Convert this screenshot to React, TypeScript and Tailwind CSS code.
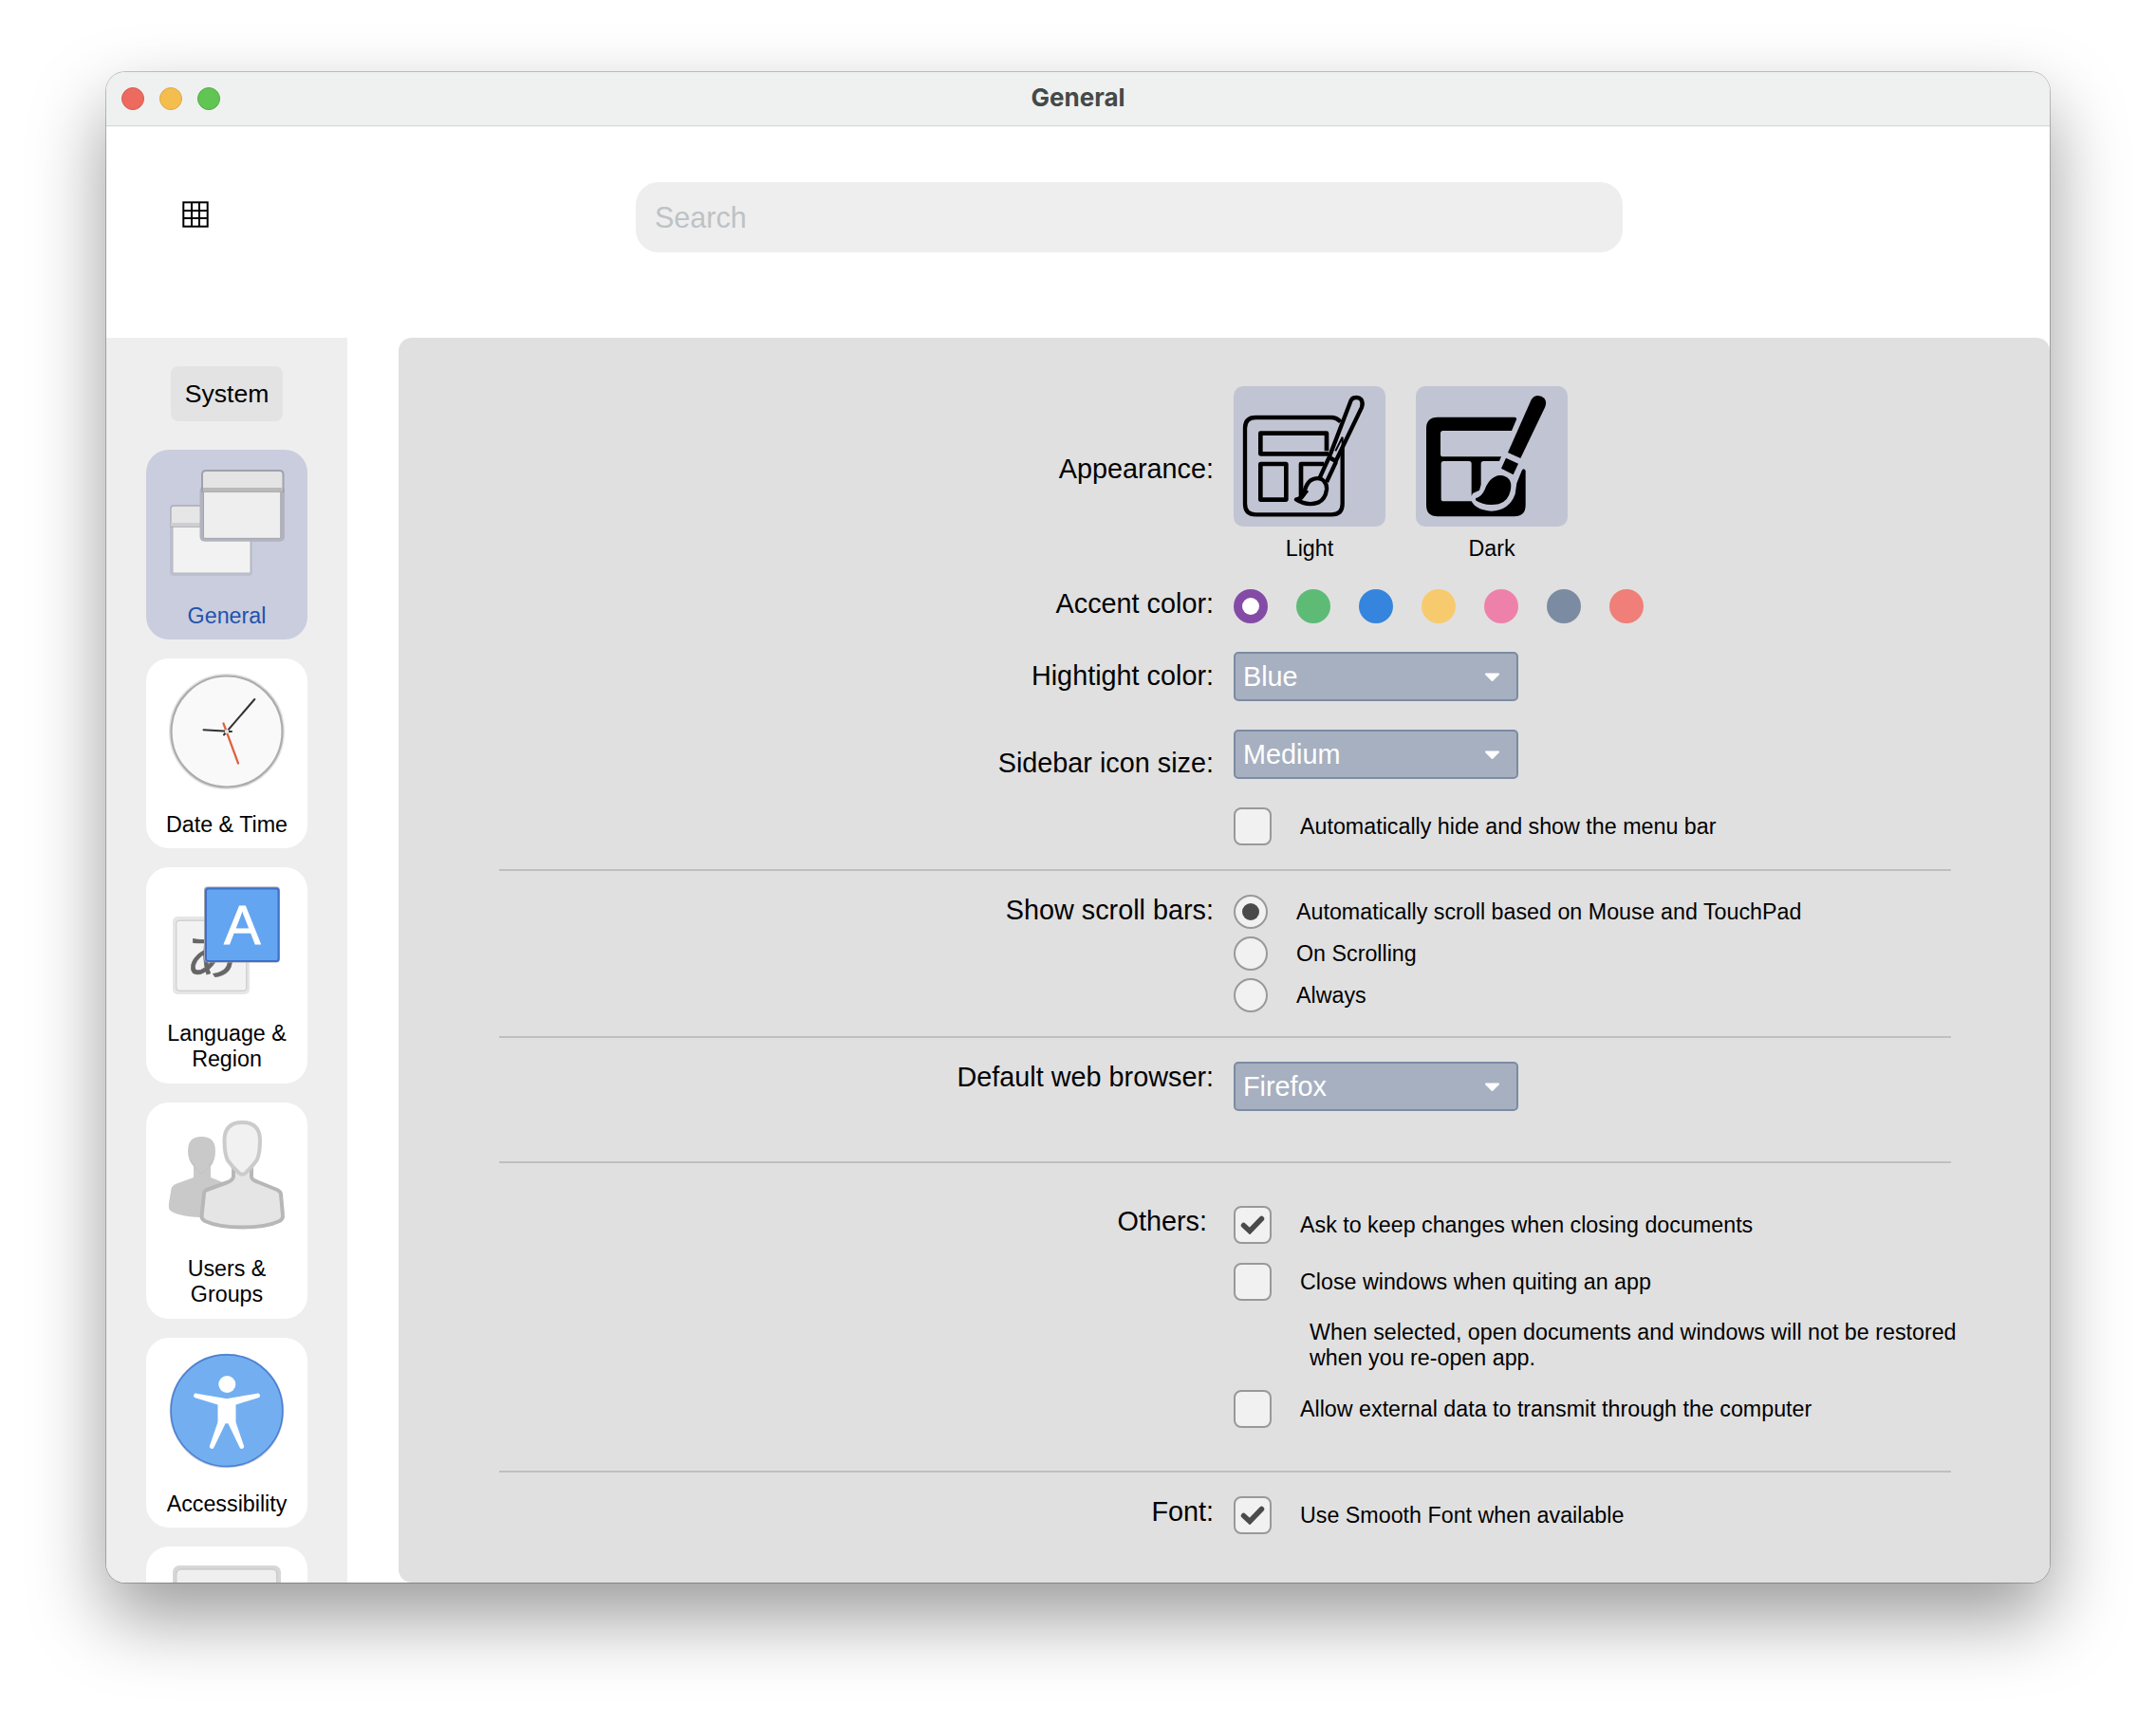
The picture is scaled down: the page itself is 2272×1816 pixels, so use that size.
import React, { useState } from "react";

function Row({
  label,
  className = "",
  labelClass = "pr-px",
  children,
}: {
  label?: string;
  className?: string;
  labelClass?: string;
  children: React.ReactNode;
}) {
  return (
    <div className={`flex items-start gap-5 ${className}`}>
      <div className={`w-[860px] shrink-0 text-right text-[28.8px] leading-[34px] ${labelClass}`}>
        {label}
      </div>
      <div>{children}</div>
    </div>
  );
}

function Divider({ className = "" }: { className?: string }) {
  return <div className={`ml-[106px] h-[2px] w-[1530px] bg-[#bfbfbf] ${className}`} />;
}

function Select({ value }: { value: string }) {
  return (
    <button className="flex h-[52px] w-[300px] items-center justify-between rounded-[5px] border-2 border-[#7b8ca3] bg-[#a7b0c0] pl-[8px] pr-[17px] text-[28.8px] leading-[34px] text-white">
      <span>{value}</span>
      <svg width="17" height="10" viewBox="0 0 17 10" className="mt-[2px]">
        <path d="M2 1.5h13L8.5 8z" fill="#fff" stroke="#fff" strokeWidth="2" strokeLinejoin="round" />
      </svg>
    </button>
  );
}

function Checkbox({
  text,
  initial = false,
  className = "",
}: {
  text: string;
  initial?: boolean;
  className?: string;
}) {
  const [on, setOn] = useState(initial);
  return (
    <div className={`flex items-center gap-[30px] ${className}`} onClick={() => setOn(!on)}>
      <div className="flex size-10 items-center justify-center rounded-[8px] border-2 border-[#999999] bg-[#f1f1f1]">
        {on && (
          <svg width="26" height="20" viewBox="0 0 26 20">
            <path
              d="M3.5 10.5L10 16.5L22.5 3.5"
              fill="none"
              stroke="#4a4a4a"
              strokeWidth="5.5"
              strokeLinecap="round"
              strokeLinejoin="miter"
            />
          </svg>
        )}
      </div>
      <span className="text-[23.27px] leading-[27px]">{text}</span>
    </div>
  );
}

function Radio({ text, on = false, onSelect }: { text: string; on?: boolean; onSelect: () => void }) {
  return (
    <div className="flex items-center gap-[30px]" onClick={onSelect}>
      <div className="flex size-9 items-center justify-center rounded-full border-2 border-[#999999] bg-[#f1f1f1]">
        {on && <div className="size-[18px] rounded-full bg-[#4a4a4a]" />}
      </div>
      <span className="text-[23.27px] leading-[27px]">{text}</span>
    </div>
  );
}

function LightArt() {
  return (
    <svg width="160" height="148" viewBox="30 21 480 444" fill="none" stroke="#000" strokeWidth="13">
      <path d="M368 134Q356 120 338 120H100Q66 120 66 154V393Q66 427 100 427H340Q374 427 374 393V215" />
      <path d="M330 235H115V170H324V226" strokeLinejoin="round" strokeWidth="14" />
      <rect x="115" y="267" width="81" height="113" rx="1" strokeWidth="14" />
      <path d="M316 267H243V374L262 350" strokeLinejoin="round" strokeWidth="14" />
      <path
        d="M401 66Q406 57 416 57Q427 56 433 63Q440 74 435 88L353 258L332 246Z"
        strokeLinejoin="round"
      />
      <path d="M331 248L302 311M354 260L324 324" />
      <path d="M352 226L374 182V214" strokeWidth="6" />
      <path
        d="M228 379Q243 378 252 362Q258 331 273 319Q290 308 308 315Q326 326 324 348Q320 379 297 389Q261 401 228 379Z"
        strokeLinejoin="round"
      />
    </svg>
  );
}

function DarkArt() {
  return (
    <svg width="160" height="148" viewBox="606 21 480 444">
      <path d="M675 119H918Q926 119 924 127L909 162H692Q684 162 684 170V236Q684 244 692 244H876L870 258H820Q812 258 812 266V332L807 350L786 360L782 368V266Q782 258 774 258H694Q686 258 686 266V377Q686 385 694 385H782Q796 413 845 416Q902 413 920 362L925 328L941 288Q947 278 953 288V397Q953 433 917 433H675Q639 433 639 397V155Q639 119 675 119Z" />
      <path d="M971 64Q979 51 992 51Q1004 51 1012 59Q1021 71 1015 86L937 249L897 231Z" />
      <path d="M891 248L930 266L914 301L876 281Z" />
      <path d="M795 376Q814 371 824 348Q836 314 864 304Q888 300 902 317Q910 329 905 352Q898 386 868 394Q824 402 795 382Z" />
    </svg>
  );
}

function AppearanceOption({ name, children }: { name: string; children: React.ReactNode }) {
  return (
    <div className="flex flex-col items-center">
      <div className="h-[148px] w-[160px] rounded-[10px] bg-[#c1c4d3]">{children}</div>
      <span className="mt-[10px] text-[23.27px] leading-[27px]">{name}</span>
    </div>
  );
}

function GeneralIcon() {
  return (
    <svg width="170" height="150" viewBox="0 0 170 150">
      <rect x="25" y="78" width="87" height="55" rx="4" fill="#bbbfd0" />
      <rect x="28" y="76" width="82" height="54" rx="1.5" fill="#f2f2f2" stroke="#b4b6be" strokeWidth="1" />
      <path d="M26 81V62Q26 59 29 59H70V81Z" fill="#e6e6e6" stroke="#a9abb5" strokeWidth="1.3" />
      <rect x="26" y="77" width="44" height="3.8" fill="#cfcfcf" />
      <rect x="56.5" y="38" width="89.5" height="58.8" rx="5" fill="#b1b3bf" />
      <rect x="60.5" y="38" width="81.3" height="55.4" rx="1.5" fill="#eeeeee" stroke="#a3a4ac" strokeWidth="1" />
      <path d="M59 44V26Q59 22 63 22H140.500Q144.500 22 144.500 26V44Z" fill="#e4e4e4" stroke="#a0a2ab" strokeWidth="2" />
      <rect x="60" y="40" width="83.5" height="4.5" fill="#b9b9b9" />
    </svg>
  );
}

function ClockIcon() {
  return (
    <svg width="170" height="150" viewBox="0 0 170 150" strokeLinecap="round">
      <circle cx="85" cy="77" r="60" fill="none" stroke="#e2e2e2" strokeWidth="2" />
      <circle cx="85" cy="77" r="58.500" fill="#f9f9f9" stroke="#acacac" strokeWidth="2.200" />
      <path d="M60.500 75.300L90 77M114.300 43L82 80.500" stroke="#333" strokeWidth="2" />
      <path d="M81.500 68.500L97 110.500" stroke="#e0603f" strokeWidth="2.200" />
      <rect x="83" y="75" width="4" height="4" rx="1" fill="#e3e3e3" />
    </svg>
  );
}

function LanguageIcon() {
  return (
    <svg width="170" height="150" viewBox="0 0 170 150">
      <rect x="28" y="52" width="81" height="82" rx="5" fill="#e6e6e6" />
      <rect x="31.800" y="56.200" width="74" height="74" rx="3" fill="#f2f2f2" stroke="#c6c6c6" strokeWidth="1" />
      <text
        x="68.500"
        y="113"
        textAnchor="middle"
        fontFamily="Noto Sans CJK JP, sans-serif"
        fontSize="54"
        fill="#666"
        stroke="#666"
        strokeWidth="0.600"
      >
        あ
      </text>
      <rect x="61" y="20.500" width="80" height="80" rx="4" fill="#a5a5ad" />
      <rect x="63" y="22.500" width="76.500" height="76.500" rx="2.500" fill="#64a5f1" stroke="#3e6fca" strokeWidth="2" />
      <text
        x="101.300"
        y="81"
        textAnchor="middle"
        fontFamily="Liberation Sans, sans-serif"
        fontSize="58"
        fill="#fff"
        stroke="#fff"
        strokeWidth="0.800"
      >
        A
      </text>
    </svg>
  );
}

function UsersIcon() {
  return (
    <svg width="170" height="150" viewBox="0 0 170 150" strokeLinejoin="round">
      <path
        d="M58.300 36Q73 36 73 51Q73 61 68 67.500V79L78 83L90 90V121H57.700Q32 120 24.500 113Q23.500 111 24 106L26.500 91Q27 88 31 86L50 79V67.500Q44 61 44 51Q44 36 58.300 36Z"
        fill="#c9c9c9"
      />
      <path d="M46.500 60Q50 68 58.300 75.500Q67 68 70 60" fill="none" stroke="#c2c2c2" strokeWidth="1" />
      <path
        d="M92 66V78.500Q91 82 86 84L64 92Q61 93.500 61 96L58.500 120Q58.500 123 62 125Q76 131.500 101.300 131.500Q127 131.500 140.500 125Q144.500 122.500 144 119L142 97Q142 94 138 92L117 83.500Q111 81.500 111 78V66Z"
        fill="#e5e5e5"
        stroke="#b7b7b7"
        strokeWidth="4"
      />
      <path
        d="M101.300 21Q82.500 21 82.500 40Q82.500 54 86 61Q91 68 98 74.500Q101.300 77 104.600 74.500Q111.500 68 116.500 61Q120 54 120 40Q120 21 101.300 21Z"
        fill="#f1f1f1"
        stroke="#cbcbcb"
        strokeWidth="4"
      />
    </svg>
  );
}

function AccessibilityIcon() {
  return (
    <svg width="170" height="150" viewBox="0 0 170 150">
      <circle cx="85" cy="77" r="60.300" fill="#c9c9cf" />
      <circle cx="85" cy="76.700" r="58.800" fill="#73aff0" stroke="#4a80d6" strokeWidth="1.600" />
      <circle cx="85.300" cy="49" r="9" fill="#fff" />
      <path d="M75.500 64L85 66L94.500 64V89L86.500 89L85 91L83.500 89H75.500Z" fill="#fff" />
      <path
        d="M52.500 61L85 66.500L117.500 61M52.500 61L77 68.500M117.500 61L93 68.500M69.300 114.500L78 89M69.300 114.500L82 88M100.700 114.500L92 89M100.700 114.500L88 88"
        stroke="#fff"
        strokeWidth="4.800"
        strokeLinecap="round"
        fill="none"
      />
    </svg>
  );
}

function DisplayIcon() {
  return (
    <svg width="170" height="150" viewBox="0 0 170 150">
      <rect x="28" y="20" width="114" height="90" rx="7" fill="#d7d7d7" />
      <rect x="31.800" y="24" width="106" height="82" rx="5" fill="#efefef" stroke="#c2c2c2" strokeWidth="1" />
    </svg>
  );
}

const cards = [
  { name: "General", icon: <GeneralIcon />, height: "h-[200px]" },
  { name: "Date & Time", icon: <ClockIcon />, height: "h-[200px]" },
  { name: "Language & Region", icon: <LanguageIcon />, height: "h-[228px]" },
  { name: "Users & Groups", icon: <UsersIcon />, height: "h-[228px]" },
  { name: "Accessibility", icon: <AccessibilityIcon />, height: "h-[200px]" },
  { name: "", icon: <DisplayIcon />, height: "h-[200px]" },
];

function Sidebar() {
  return (
    <aside className="flex h-full w-[254px] shrink-0 flex-col items-center overflow-hidden bg-[#eeeeee] pt-[30px]">
      <button className="mb-[30px] h-[58px] w-[118px] shrink-0 rounded-[8px] bg-[#e3e3e3] text-[26.6px] leading-[30px]">
        System
      </button>
      <div className="flex flex-col gap-5">
        {cards.map((c, i) => (
          <div
            key={i}
            className={`flex w-[170px] shrink-0 flex-col items-center rounded-[24px] ${c.height} ${
              i === 0 ? "bg-[#cacddd] text-[#2152ae]" : "bg-white"
            }`}
          >
            <div className="h-[162px] shrink-0">{c.icon}</div>
            {c.name && (
              <div className="w-[136px] text-center text-[23.27px] leading-[27px]">{c.name}</div>
            )}
          </div>
        ))}
      </div>
    </aside>
  );
}

const accents = ["#844ba6", "#5dbb76", "#3584dd", "#f7cb6d", "#ee81aa", "#7b8ba1", "#ef7f78"];

function Content() {
  const [accent, setAccent] = useState(0);
  const [scroll, setScroll] = useState(0);
  const scrollModes = ["Automatically scroll based on Mouse and TouchPad", "On Scrolling", "Always"];
  return (
    <main className="h-full w-[1740px] shrink-0 overflow-hidden rounded-[14px] bg-[#e0e0e0] pt-[51px]">
      <Row label="Appearance:" labelClass="mt-[70px] pr-px">
        <div className="flex gap-8">
          <AppearanceOption name="Light">
            <LightArt />
          </AppearanceOption>
          <AppearanceOption name="Dark">
            <DarkArt />
          </AppearanceOption>
        </div>
      </Row>
      <Row label="Accent color:" className="mt-[29px] h-9" labelClass="-mt-[2px] pr-px">
        <div className="flex gap-[30px]">
          {accents.map((c, i) => (
            <button
              key={c}
              onClick={() => setAccent(i)}
              className="flex size-9 items-center justify-center rounded-full"
              style={{ backgroundColor: c }}
            >
              {accent === i && <span className="size-[18px] rounded-full bg-white" />}
            </button>
          ))}
        </div>
      </Row>
      <Row label="Hightight color:" className="mt-[30px]" labelClass="mt-[8px] pr-px">
        <Select value="Blue" />
      </Row>
      <Row label="Sidebar icon size:" className="mt-[30px]" labelClass="mt-[18px] pr-px">
        <Select value="Medium" />
      </Row>
      <Row className="mt-[30px]">
        <Checkbox text="Automatically hide and show the menu bar" />
      </Row>
      <Divider className="my-[25px]" />
      <Row label="Show scroll bars:" labelClass="-mt-px pr-px">
        <div className="flex flex-col gap-2">
          {scrollModes.map((m, i) => (
            <Radio key={m} text={m} on={scroll === i} onSelect={() => setScroll(i)} />
          ))}
        </div>
      </Row>
      <Divider className="my-[25px]" />
      <Row label="Default web browser:" labelClass="-mt-px pr-px">
        <Select value="Firefox" />
      </Row>
      <Divider className="mb-[45px] mt-[53px]" />
      <Row label="Others:" labelClass="-mt-px pr-[8px]">
        <Checkbox text="Ask to keep changes when closing documents" initial />
        <Checkbox className="mt-5" text="Close windows when quiting an app" />
        <p className="my-5 ml-20 w-[700px] text-[23.27px] leading-[27px]">
          When selected, open documents and windows will not be restored
          <br />
          when you re-open app.
        </p>
        <Checkbox text="Allow external data to transmit through the computer" />
      </Row>
      <Divider className="mb-[25px] mt-[45px]" />
      <Row label="Font:" labelClass="-mt-px pr-px">
        <Checkbox text="Use Smooth Font when available" initial />
      </Row>
    </main>
  );
}

export default function App() {
  return (
    <div className="h-[1816px] w-[2272px] overflow-hidden bg-white px-[112px] pt-[76px] font-['Liberation_Sans',Arial,sans-serif] text-black">
      <div className="flex h-[1592px] w-[2048px] flex-col overflow-hidden rounded-[20px] bg-white shadow-[0_0_0_1px_rgba(0,0,0,0.22),0_36px_80px_rgba(0,0,0,0.4)]">
        <header className="flex h-[57px] shrink-0 items-center border-b border-[#d6d8d7] bg-[#eff1f0] px-4">
          <div className="flex w-[300px] gap-4">
            <span className="size-6 rounded-full border border-[#d95a4e] bg-[#ec6a5e]" />
            <span className="size-6 rounded-full border border-[#dfa640] bg-[#f4be4f]" />
            <span className="size-6 rounded-full border border-[#50ac3e] bg-[#61c554]" />
          </div>
          <h1 className="-mt-[2px] flex-1 text-center font-['Inter',sans-serif] text-[26px] font-bold leading-[32px] text-[#454948]">
            General
          </h1>
          <div className="w-[300px]" />
        </header>
        <div className="flex h-[223px] shrink-0 items-start border-t border-[#f3f4f4]">
          <svg width="28" height="28" viewBox="0 0 28 28" className="ml-[80px] mt-[78px]" fill="none" stroke="#000">
            <rect x="1.300" y="1.300" width="25.400" height="25.400" strokeWidth="2" />
            <path d="M10 1V27M18 1V27M1 10H27M1 18H27" strokeWidth="2" />
          </svg>
          <input
            placeholder="Search"
            className="ml-[450px] mt-[58px] h-[74px] w-[1040px] rounded-[24px] bg-[#eeeeee] px-5 text-[30.5px] leading-[36px] placeholder:text-[#bdc2c5]"
          />
        </div>
        <div className="flex min-h-0 flex-1 gap-[54px]">
          <Sidebar />
          <Content />
        </div>
      </div>
    </div>
  );
}
